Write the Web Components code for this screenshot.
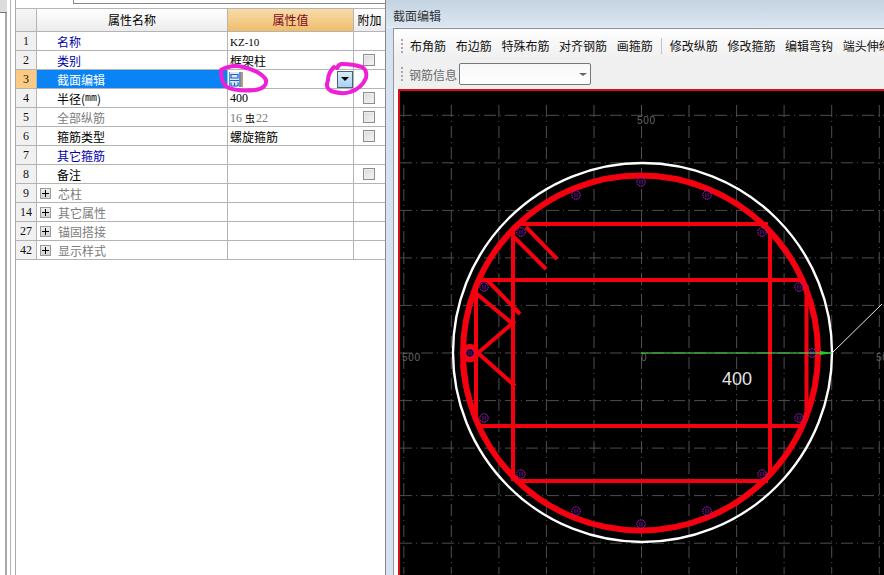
<!DOCTYPE html>
<html lang="zh"><head><meta charset="utf-8"><title>截面编辑</title>
<style>
html,body{margin:0;padding:0;background:#fff;overflow:hidden}
body{font:12px "Noto Sans CJK SC","Liberation Sans",sans-serif;color:#000}
.m{font:10px "Liberation Mono",monospace}
.s{font:12px "Liberation Serif",serif}
</style></head><body>
<app-shell>
  <prop-panel slot="left">
    <prop-row head></prop-row>
    <prop-row num="1" tone="blue">名称<span slot="value" class="s" style="font-size:11px">KZ-10</span></prop-row>
    <prop-row num="2" tone="blue" check>类别<span slot="value">框架柱</span></prop-row>
    <prop-row num="3" tone="sel" dropdown>截面编辑</prop-row>
    <prop-row num="4" check>半径(<span class="m">mm</span>)<span slot="value" class="s">400</span></prop-row>
    <prop-row num="5" tone="gray" check>全部纵筋<span slot="value" style="color:#777"><span class="s">16</span><span style="color:#000;font-size:10px;margin:0 1px 0 3px">虫</span><span class="s">22</span></span></prop-row>
    <prop-row num="6" check>箍筋类型<span slot="value">螺旋箍筋</span></prop-row>
    <prop-row num="7" tone="blue">其它箍筋</prop-row>
    <prop-row num="8" check>备注</prop-row>
    <prop-row num="9" tone="gray" group>芯柱</prop-row>
    <prop-row num="14" tone="gray" group>其它属性</prop-row>
    <prop-row num="27" tone="gray" group>锚固搭接</prop-row>
    <prop-row num="42" tone="gray" group>显示样式</prop-row>
  </prop-panel>
  <section-window slot="right">
    <span slot="title">截面编辑</span>
    <tool-bar slot="bar">
      <tool-btn>布角筋</tool-btn><tool-btn>布边筋</tool-btn><tool-btn>特殊布筋</tool-btn><tool-btn>对齐钢筋</tool-btn><tool-btn>画箍筋</tool-btn><tool-sep></tool-sep><tool-btn>修改纵筋</tool-btn><tool-btn>修改箍筋</tool-btn><tool-btn>编辑弯钩</tool-btn><tool-btn>端头伸缩</tool-btn>
    </tool-bar>
    <tool-bar slot="bar" flat><tool-label>钢筋信息</tool-label><combo-box></combo-box></tool-bar>
    <section-canvas slot="canvas"></section-canvas>
  </section-window>
</app-shell>
<script>
function def(name, html, extra){
  const t=document.createElement('template'); t.innerHTML=html;
  customElements.define(name, class extends HTMLElement{
    constructor(){super();this.attachShadow({mode:'open'}).append(t.content.cloneNode(true));if(extra)extra.call(this,this.shadowRoot);}
  });
}
def('app-shell',`<style>:host{display:grid;grid-template-columns:386px 498px;width:884px;height:575px;overflow:hidden;position:relative}
svg{position:absolute;left:0;top:0;pointer-events:none}</style>
<slot name="left"></slot><slot name="right"></slot>
<svg width="400" height="110" fill="none" stroke="#ee1fd6" stroke-width="4" stroke-linecap="round" stroke-linejoin="round">
<path d="M221 70C227 66 236 65 243 67C253 69 263 74 266 80C267 85 263 89 255 90C245 91 233 90 227 87C222 84 221 76 221 70Z"/>
<path d="M334 67C331 70 328 75 328 80C326 85 327 89 331 91C337 93 345 94 350 92C357 90 363 85 366 78C367 73 366 69 362 67C356 65 348 64 342 64C339 64 338 66 337 68"/>
</svg>`);
def('prop-panel',`<style>:host{display:grid;grid-template-columns:16px 369px;height:575px;border-right:1px solid #8a8a8a;background:#fff}
.rail{position:relative;border-right:1px solid #aaa;box-sizing:border-box;display:flex;flex-direction:column;
background:linear-gradient(90deg,#fff 5px,#a8a8a8 5px,#a8a8a8 7px,#fff 7px,#fff 10px,#b4b4b4 10px,#b4b4b4 11px,#fff 11px)}
.corner{width:7px;height:12px;background:#dcdcdc;border-bottom:1px solid #777}
.top{height:8px}.box{margin-left:57px;height:3px;border:1px solid #888;border-top:0;border-right:0;background:#fff}
.tbl{display:flex;flex-direction:column;border-top:1px solid #b4b4b4}</style>
<div class="rail"><div class="corner"></div></div>
<div><div class="top"><div class="box"></div></div><div class="tbl"><slot></slot></div></div>`);
def('prop-row',`<style>:host{display:grid;grid-template-columns:21px 191px 126px 31px;height:19px;line-height:18px;font-size:12px;white-space:nowrap}
:host([head]){height:23px;line-height:22px}
.c{box-sizing:border-box;border-right:1px solid #b4b4b4;border-bottom:1px solid #b4b4b4;display:flex;align-items:center;min-width:0;overflow:hidden}
.c:last-child{border-right:0}
.n{justify-content:center;background:#f1f1f1;font:12px "Liberation Serif",serif;color:#111;padding-top:1px}
.name{padding:1px 0 0 20px;gap:0}
.val{padding:1px 0 0 2px;justify-content:space-between}
.chk{justify-content:center;padding-right:1px}
:host([tone=blue]) .name{color:#0000a8}
:host([tone=gray]) .name{color:#7c7c7c}
:host([tone=sel]) .name{background:#0a84f5;color:#fff}
:host([tone=sel]) .n{background:#fbcb85}
:host([head]) .n{background:linear-gradient(#f6f6f6,#e9e9e9)}
:host([head]) .name{padding:0;justify-content:center;background:linear-gradient(#fff,#ececec);color:#000}
:host([head]) .val{padding:0;justify-content:center;background:linear-gradient(#f8dcaa,#efbd6c);color:#7c0a1e}
:host([head]) .chk{background:linear-gradient(#fff,#ececec);padding:0}
:host([group]) .name{padding:1px 0 0 3px;gap:7px}
.cb{width:12px;height:12px;box-sizing:border-box;border:1px solid #8e8e8e;background:linear-gradient(135deg,#d8d8d8,#f6f6f6);outline:1px solid #ececec;outline-offset:-2px}
.plus{width:11px;height:11px;box-sizing:border-box;border:1px solid #9a9a9a;background:linear-gradient(#eee,#d2d2d2);display:block}
.dd{width:16px;height:17px;box-sizing:border-box;border:1px solid #47637a;background:linear-gradient(#d8ebf9,#a9d3f2);display:flex;align-items:center;justify-content:center}
.dd i{border:4px solid transparent;border-top:4px solid #000;border-bottom:0;display:block}
.ic{display:block}</style>
<div class="c n"></div><div class="c name"></div><div class="c val"><slot name="value"></slot></div><div class="c chk"></div>`,
function(r){
  const [n,name,val,chk]=r.querySelectorAll('.c');
  const num=this.getAttribute('num');
  if(num)n.textContent=num;
  const slot=document.createElement('slot');
  if(this.hasAttribute('group')){
    const s=document.createElementNS('http://www.w3.org/2000/svg','svg');
    s.setAttribute('class','plus');s.setAttribute('viewBox','0 0 9 9');
    s.innerHTML='<path d="M1 4.5H8M4.5 1V8" stroke="#000" stroke-width="1"/>';
    name.append(s);
  }
  if(this.hasAttribute('head')){
    name.textContent='属性名称';val.textContent='属性值';chk.textContent='附加';return;
  }
  name.append(slot);
  if(this.hasAttribute('check')){const b=document.createElement('div');b.className='cb';chk.append(b);}
  if(this.hasAttribute('dropdown')){
    val.style.padding='0 0 0 1px';
    val.insertAdjacentHTML('beforeend','<svg class="ic" width="14" height="15" viewBox="0 0 14 15"><rect width="14" height="15" fill="#4f92e0"/><rect x="1" width="9" height="15" fill="#dbe9fb"/><path d="M2 2.5H9V6H2ZM1 8.5H10M2 10.5V14M5.5 10.5V14M9 10.5V14M2 14H9" fill="none" stroke="#1f5fc0" stroke-width="1.2"/><rect x="12" width="2" height="15" fill="#c8955a"/></svg><div class="dd"><i></i></div>');
  }
});
def('section-window',`<style>:host{display:flex;flex-direction:column;height:575px;width:498px;background:#d6e2f2;overflow:hidden}
.title{height:28px;flex:none;box-sizing:border-box;padding:3px 0 0 7px;display:flex;align-items:center;font-size:12px;color:#333;background:linear-gradient(#c4d2e1,#dbe7f2);border-bottom:1px solid #e6eff6}
.body{flex:1;min-height:0;margin-left:7px;border-left:1px solid #999;border-top:1px solid #8e8e8e;background:#fff;display:flex;flex-direction:column}
.cv{flex:1;min-height:0;padding-left:4px;display:flex}</style>
<div class="title"><slot name="title"></slot></div>
<div class="body"><slot name="bar"></slot><div class="cv"><slot name="canvas"></slot></div></div>`);
def('tool-bar',`<style>:host{display:flex;align-items:center;height:30px;box-sizing:border-box;padding:3px 0 0 7px;gap:9.7px;white-space:nowrap;font-size:12px;color:#111;background:linear-gradient(#fff,#efefef)}
:host([flat]){background:#f0f0f0;gap:8px;padding:0 0 0 7px}
.g{width:2px;height:14px;flex:none;margin-right:-2.7px;background:repeating-linear-gradient(#a8a8a8 0 2px,transparent 2px 4px)}
:host([flat]) .g{margin-right:-2px}
</style><div class="g"></div><slot></slot>`);
def('tool-btn',`<style>:host{display:block;flex:none}</style><slot></slot>`);
def('tool-sep',`<style>:host{display:block;width:1px;height:16px;background:#c4c4c4;margin:0 -2px 0 -1.5px;flex:none}</style>`);
def('tool-label',`<style>:host{display:block;color:#6a6a6a;flex:none;margin-right:-6px}</style><slot></slot>`);
def('combo-box',`<style>:host{display:flex;justify-content:flex-end;align-items:center;box-sizing:border-box;width:132px;height:22px;border:1px solid #777;border-radius:2px;background:linear-gradient(#f8f8f8,#fff);padding-right:3px;flex:none}
i{border:4px solid transparent;border-top:3px solid #666;border-bottom:0;margin-right:0}</style><i></i>`);
def('section-canvas',`<style>:host{display:block;width:484px;flex:none;border:solid #d8101a;border-width:2px 0 0 2px;background:#000;overflow:hidden}svg{display:block}text{font-family:"Liberation Sans",sans-serif}</style>
<svg width="484" height="483" viewBox="400 92 484 483"></svg>`,
function(r){
  let h='';
  const xs=[],ys=[];
  for(let i=-5;i<=5;i++){xs.push(641.5+i*47.55);}
  for(let i=-5;i<=5;i++){ys.push(354+i*47.55);}
  const dash='stroke="#4e4e4e" stroke-width="1" stroke-dasharray="12 4 1 4" fill="none"';
  xs.forEach(x=>{if(x<884)h+=`<path d="M${x.toFixed(1)} 106V575" ${dash}/>`});
  ys.forEach(y=>{if(y>100)h+=`<path d="M400 ${y.toFixed(1)}H884" ${dash}/>`});
  h+=`<text x="637" y="125" font-size="10" fill="#666" textLength="18">500</text>
  <text x="402" y="362" font-size="10" fill="#666" textLength="18">500</text>
  <text x="876" y="362" font-size="10" fill="#666" textLength="18">500</text>
  <text x="641" y="362" font-size="10" fill="#666">0</text>`;
  h+=`<circle cx="642.5" cy="353.5" r="189.5" fill="none" stroke="#fff" stroke-width="2.4"/>`;
  h+=`<circle cx="640.5" cy="354" r="177.5" fill="none" stroke="#f5000f" stroke-width="6"/>`;
  h+=`<g stroke="#f5000f" stroke-width="4" fill="none">
  <path d="M516 225H768M478 281H802M478 427H802M516 482H768"/>
  <path d="M513 232V482M770 230V478M476 290V420M806.5 286V420"/>
  <path d="M526 228L557 260M514 238L546 270M488 282L520 315M477 295L514 326M478 354L515 322M478 354L515 387"/>
  <path d="M462 365C464 390 469 405 476 420" stroke-width="4"/>
  </g>
  <circle cx="470" cy="354" r="6.5" fill="#400" stroke="#f5000f" stroke-width="5.5"/>`;
  [[641,183],[576,196],[521,233],[484,288],[470,354],[707,196],[762,233],[799,288],[812,354],[484,419],[521,475],[576,512],[641,525],[707,512],[762,475],[799,419]].forEach(([x,y])=>{
    h+=`<circle cx="${x}" cy="${y}" r="4.2" fill="#000" fill-opacity=".6" stroke="#c020e8" stroke-width="1" stroke-dasharray="1.6 .7"/><path d="M${x-2} ${y-1}h1.6M${x+.5} ${y-1}h1.6M${x-2} ${y+1}h1.6M${x+.5} ${y+1}h1.6" stroke="#a018c8" stroke-width=".9"/>`;
  });
  h+=`<path d="M641 354H832" stroke="#55ee55" stroke-width="1"/><path d="M820 352L832 354L820 356Z" fill="#24d024"/>
  <path d="M832 354L882 305" stroke="#e8e8e8" stroke-width="1"/>
  <text x="722" y="386" font-size="18" fill="#e4e4e4">400</text>`;
  r.querySelector('svg').innerHTML=h;
});
</script>
</body></html>
